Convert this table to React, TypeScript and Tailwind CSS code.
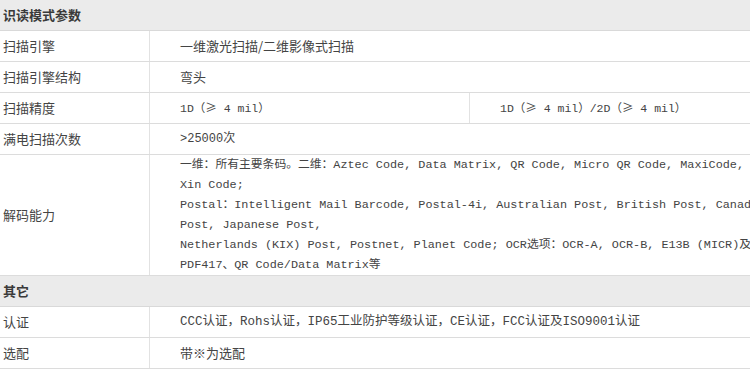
import React from "react";

const cjk = { fontFamily: '"Noto Sans CJK SC", "Noto Sans", sans-serif' };
const mono = { fontFamily: '"Liberation Mono", "Noto Sans CJK SC", monospace' };

function Header({ title }: { title: string }) {
  return (
    <div className="flex h-[31px] items-center border-b border-[#d9d9d9] bg-[#ebebeb] pl-[3px] text-[13px] font-bold text-[#3a3a3a]" style={cjk}>
      {title}
    </div>
  );
}

function Row({ label, children, tall }: { label: string; children: React.ReactNode; tall?: boolean }) {
  return (
    <div className={`flex border-b border-[#dcdcdc] ${tall ? "h-[121px]" : "h-[31px]"}`}>
      <div className="flex w-[150px] shrink-0 items-center border-r border-[#e2e2e2] pl-[3px] text-[13px] text-[#444]" style={cjk}>
        {label}
      </div>
      <div className="flex min-w-0 flex-1">{children}</div>
    </div>
  );
}

function Cell({ children, mono: isMono, className = "" }: { children: React.ReactNode; mono?: boolean; className?: string }) {
  return (
    <div
      className={`flex items-center whitespace-nowrap pl-[30px] text-[#444] ${className}`}
      style={isMono ? mono : cjk}
    >
      {children}
    </div>
  );
}

function Ge() {
  return <span style={cjk}>≥</span>;
}

export default function App() {
  const decode = [
    "一维：所有主要条码。二维：Aztec Code, Data Matrix, QR Code, Micro QR Code, MaxiCode, Han",
    "Xin Code;",
    "Postal：Intelligent Mail Barcode, Postal-4i, Australian Post, British Post, Canadian",
    "Post, Japanese Post,",
    "Netherlands (KIX) Post, Postnet, Planet Code; OCR选项：OCR-A, OCR-B, E13B (MICR)及",
    "PDF417、QR Code/Data Matrix等",
  ];
  return (
    <div className="w-[750px] overflow-hidden bg-white">
      <div className="w-[820px]">
        <Header title="识读模式参数" />
        <Row label="扫描引擎">
          <Cell className="text-[13px]">一维激光扫描/二维影像式扫描</Cell>
        </Row>
        <Row label="扫描引擎结构">
          <Cell className="text-[13px]">弯头</Cell>
        </Row>
        <Row label="扫描精度">
          <Cell mono className="w-[320px] border-r border-[#e2e2e2] text-[11.5px]">
            <span>1D（<Ge /> 4 mil）</span>
          </Cell>
          <Cell mono className="text-[11.5px]">
            <span>1D（<Ge /> 4 mil）/2D（<Ge /> 4 mil）</span>
          </Cell>
        </Row>
        <Row label="满电扫描次数">
          <Cell mono className="text-[12px]">&gt;25000次</Cell>
        </Row>
        <Row label="解码能力" tall>
          <div className="flex flex-col justify-center whitespace-nowrap pl-[30px] text-[11.8px] leading-[20px] text-[#444]" style={mono}>
            {decode.map((l, i) => (
              <div key={i}>{l}</div>
            ))}
          </div>
        </Row>
        <Header title="其它" />
        <Row label="认证">
          <Cell mono className="text-[12.5px]">CCC认证，Rohs认证，IP65工业防护等级认证，CE认证，FCC认证及ISO9001认证</Cell>
        </Row>
        <Row label="选配">
          <Cell className="text-[13px]">带※为选配</Cell>
        </Row>
      </div>
    </div>
  );
}
